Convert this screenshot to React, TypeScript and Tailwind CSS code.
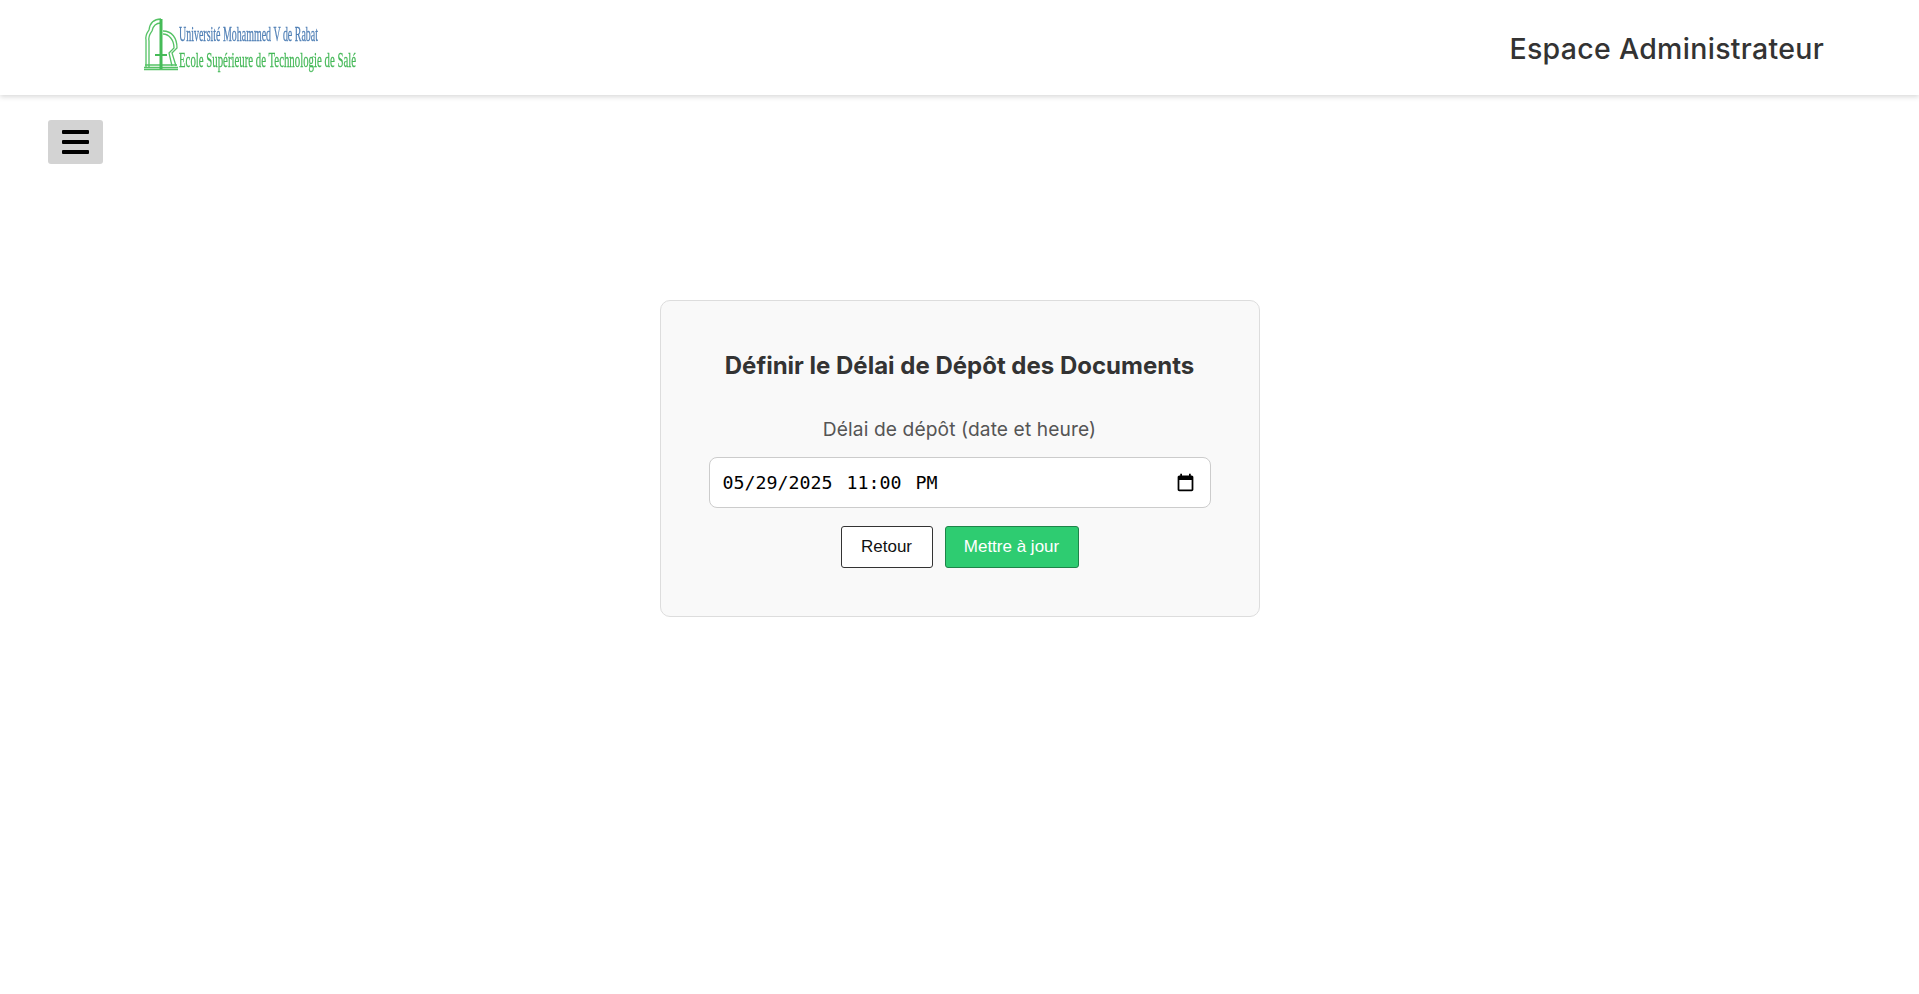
import React from 'react';

function Logo() {
    return (
        <svg width="216" height="52" viewBox="0 0 216 52" className="mb-2 block overflow-visible blur-[0.4px]">
            {/* arch */}
            <g fill="none" stroke="#55c265" strokeWidth="1.3">
                <path d="M3 50V22C2 16 5 14 6 12C7 4 12 1 18 1" />
                <path d="M6 50V23C5 17 8 15 9 13C10 8 13 5 18 5" />
                <path d="M20 13C29 13 34 20 34 30L29 35L33 48" />
                <path d="M20 16C26 16 31 22 31 30L26 35L29 48" />
                <path d="M2 47H34M1 49.5H35M1 51.5H35" />
            </g>
            <path d="M16.5 1H19.5V51H16.5Z" fill="#45bb57" />
            <path d="M12 36H24V38H12Z" fill="#45bb57" />
            {/* wordmark */}
            <g fontFamily="'Liberation Serif', serif" fontSize="21">
                <text transform="translate(36 22.5) scale(0.5 1)" fill="#4f7fb5" stroke="#4f7fb5" strokeWidth="0.3" textLength="278" lengthAdjust="spacingAndGlyphs">Université Mohammed V de Rabat</text>
                <text transform="translate(36 48.5) scale(0.5 1)" fill="#45b858" stroke="#45b858" strokeWidth="0.3" textLength="354" lengthAdjust="spacingAndGlyphs">Ecole Supérieure de Technologie de Salé</text>
            </g>
        </svg>
    );
}

export default function App() {
    return (
        <div className="min-h-[994px] bg-white font-['Inter',sans-serif]">
            {/* Header */}
            <header className="flex h-[95px] items-center justify-between bg-white pl-[143px] pr-[95px] shadow-[0_2px_5px_rgba(0,0,0,0.15)]">
                <Logo />
                <h1 className="pt-[3px] text-[28.5px] font-medium tracking-[0.3px] text-[#333]">Espace Administrateur</h1>
            </header>

            {/* Menu toggle */}
            <div className="pl-12 pt-[25px]">
                <button className="flex h-11 w-[55px] flex-col items-center justify-center gap-[6px] rounded-[3px] bg-[#d3d3d3]">
                    <span className="block h-1 w-[27px] rounded-[1px] bg-black" />
                    <span className="block h-1 w-[27px] rounded-[1px] bg-black" />
                    <span className="block h-1 w-[27px] rounded-[1px] bg-black" />
                </button>
            </div>

            {/* Form card */}
            <main className="mt-[136px] flex justify-center">
                <div className="h-[317px] w-[600px] rounded-[10px] border border-[#ddd] bg-[#f9f9f9] px-12 pt-[49px] text-center">
                    <h2 className="text-[24px] font-bold leading-[32px] text-[#333]">Définir le Délai de Dépôt des Documents</h2>
                    <label htmlFor="deadline" className="mt-[35px] block text-[19.2px] leading-[24px] tracking-[0.1px] text-[#555]">
                        Délai de dépôt (date et heure)
                    </label>
                    <div className="relative mt-[16px] h-[51px] w-[502px]">
                        <input
                            id="deadline"
                            type="text"
                            defaultValue="05/29/2025 11:00 PM"
                            className="block h-full w-full rounded-[8px] border border-[#ccc] bg-white pl-[13px] pr-10 font-['DejaVu_Sans_Mono',monospace] text-[18.3px] text-black [word-spacing:3px]"
                        />
                        <svg width="21" height="21" viewBox="0 0 24 24" className="absolute right-[15px] top-[15px]" fill="#000">
                            <path d="M19 4h-1V2h-2v2H8V2H6v2H5c-1.1 0-2 .9-2 2v14c0 1.1.9 2 2 2h14c1.1 0 2-.9 2-2V6c0-1.1-.9-2-2-2zm0 16H5V9h14v11z" />
                        </svg>
                    </div>
                    <div className="mt-[18px] flex justify-center gap-3">
                        <button className="h-[42px] w-[92px] rounded-[3px] border border-[#333] bg-white font-['Liberation_Sans',sans-serif] text-[17px] text-[#111]">
                            Retour
                        </button>
                        <button className="h-[42px] w-[134px] rounded-[3px] border border-[#1e8449] bg-[#2ecc71] font-['Liberation_Sans',sans-serif] text-[17px] text-white">
                            Mettre à jour
                        </button>
                    </div>
                </div>
            </main>
        </div>
    );
}
